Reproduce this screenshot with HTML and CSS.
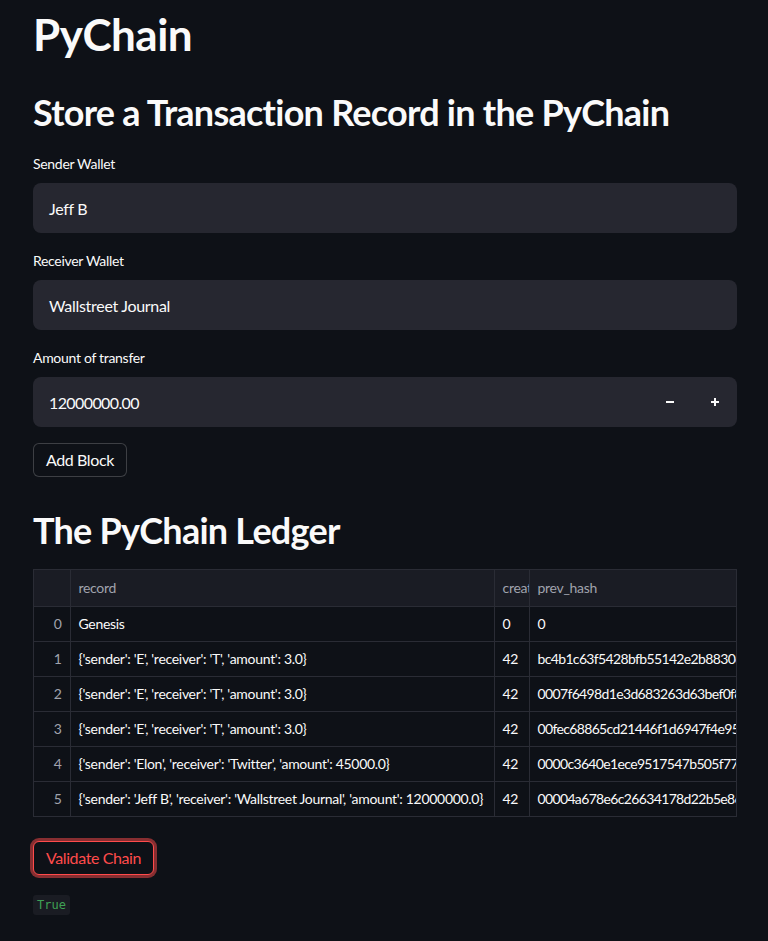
FILE: index.html
```html
<!DOCTYPE html>
<html lang="en">
<head>
<meta charset="utf-8">
<title>PyChain</title>
<link rel="stylesheet" href="styles.css">
</head>
<body>
<main class="app">
  <h1 class="title">PyChain</h1>
  <h2 class="heading">Store a Transaction Record in the PyChain</h2>

  <div class="field first">
    <label class="label">Sender Wallet</label>
    <div class="input">Jeff B</div>
  </div>
  <div class="field">
    <label class="label">Receiver Wallet</label>
    <div class="input">Wallstreet Journal</div>
  </div>
  <div class="field">
    <label class="label">Amount of transfer</label>
    <div class="input number">
      <span class="value">12000000.00</span>
      <div class="steppers">
        <span class="step"><svg width="10" height="10" viewBox="0 0 10 10"><rect x="1" y="4" width="8" height="2" fill="#fafafa"/></svg></span>
        <span class="step"><svg width="10" height="10" viewBox="0 0 10 10"><rect x="1" y="4" width="8" height="2" fill="#fafafa"/><rect x="4" y="1" width="2" height="8" fill="#fafafa"/></svg></span>
      </div>
    </div>
  </div>
  <div class="actions">
    <button class="btn">Add Block</button>
  </div>

  <h2 class="heading ledger">The PyChain Ledger</h2>

  <div class="grid">
    <table>
      <colgroup>
        <col class="c-idx"><col class="c-rec"><col class="c-cre"><col class="c-hash">
      </colgroup>
      <thead>
        <tr><th></th><th>record</th><th>creator_id</th><th>prev_hash</th></tr>
      </thead>
      <tbody>
        <tr><td class="idx">0</td><td>Genesis</td><td>0</td><td class="hash">0</td></tr>
        <tr><td class="idx">1</td><td>{'sender': 'E', 'receiver': 'T', 'amount': 3.0}</td><td>42</td><td class="hash">bc4b1c63f5428bfb55142e2b88306a1f</td></tr>
        <tr><td class="idx">2</td><td>{'sender': 'E', 'receiver': 'T', 'amount': 3.0}</td><td>42</td><td class="hash">0007f6498d1e3d683263d63bef0f80a2</td></tr>
        <tr><td class="idx">3</td><td>{'sender': 'E', 'receiver': 'T', 'amount': 3.0}</td><td>42</td><td class="hash">00fec68865cd21446f1d6947f4e95b1c</td></tr>
        <tr><td class="idx">4</td><td>{'sender': 'Elon', 'receiver': 'Twitter', 'amount': 45000.0}</td><td>42</td><td class="hash">0000c3640e1ece9517547b505f7799ad</td></tr>
        <tr><td class="idx">5</td><td>{'sender': 'Jeff B', 'receiver': 'Wallstreet Journal', 'amount': 12000000.0}</td><td>42</td><td class="hash">00004a678e6c26634178d22b5e8634f0</td></tr>
      </tbody>
    </table>
  </div>

  <div class="actions validate">
    <button class="btn danger">Validate Chain</button>
  </div>
  <div class="result"><code class="code">True</code></div>
</main>
</body>
</html>
```

FILE: styles.css
```css
* { box-sizing: border-box; }
html, body {
  margin: 0;
  padding: 0;
  background: #0e1117;
  color: #fafafa;
  font-family: Lato, "Noto Sans", sans-serif;
}
.app {
  width: 704px;
  margin-left: 33px;
  display: flex;
  flex-direction: column;
}
.title {
  margin: 8px 0 0 0;
  font-size: 44px;
  line-height: 52px;
  font-weight: 700;
  letter-spacing: -0.5px;
}
.heading {
  margin: 30px 0 0 0;
  font-size: 36px;
  line-height: 44px;
  font-weight: 700;
  letter-spacing: -0.75px;
}
.field {
  display: flex;
  flex-direction: column;
  margin-top: 18px;
}
.field.first { margin-top: 20px; }
.label {
  font-size: 14px;
  line-height: 20px;
  margin-bottom: 9px;
  letter-spacing: -0.3px;
}
.input {
  height: 50px;
  background: #262730;
  border-radius: 8px;
  padding: 0 16px;
  display: flex;
  align-items: center;
  font-size: 16px;
  letter-spacing: -0.3px;
}
.input.number {
  padding-right: 0;
  justify-content: space-between;
}
.value { letter-spacing: -0.6px; }
.steppers {
  display: flex;
  height: 100%;
}
.step {
  width: 45px;
  display: flex;
  align-items: center;
  justify-content: center;
}
.actions {
  display: flex;
  margin-top: 16px;
}
.btn {
  font-family: inherit;
  font-size: 16px;
  color: #fafafa;
  background: #0e1117;
  border: 1px solid rgba(250, 250, 250, 0.2);
  border-radius: 6px;
  height: 34px;
  padding: 0 12px;
  line-height: 1;
  letter-spacing: -0.4px;
}
.ledger { margin-top: 31px; }
.grid {
  margin-top: 17px;
  width: 704px;
  overflow: hidden;
  border: 1px solid #2a2c35;
}
table {
  border-collapse: collapse;
  table-layout: fixed;
  width: 780px;
  font-size: 14px;
  letter-spacing: -0.3px;
}
.c-idx { width: 36px; }
.c-rec { width: 424px; }
.c-cre { width: 35px; }
.c-hash { width: 285px; }
th, td {
  height: 35px;
  padding: 0 8px;
  text-align: left;
  white-space: nowrap;
  overflow: hidden;
  border-right: 1px solid #2a2c35;
  border-bottom: 1px solid #2a2c35;
  font-weight: 400;
}
th {
  height: 36px;
  background: #1a1c24;
  color: #a0a3ad;
  text-overflow: clip;
}
td { color: #fafafa; }
td.hash { letter-spacing: -0.65px; }
td.idx {
  text-align: right;
  color: #a0a3ad;
}
tbody tr:last-child td { border-bottom: none; }
.validate { margin-top: 24px; }
.btn.danger {
  color: #ff4b4b;
  border-color: #ff4b4b;
  box-shadow: 0 0 0 3px rgba(255, 75, 75, 0.5);
  height: 34px;
  padding: 0 12px;
}
.result {
  margin-top: 20px;
  display: flex;
}
.code {
  font-family: "DejaVu Sans Mono", monospace;
  font-size: 12px;
  color: #3fa155;
  background: #1a1c23;
  padding: 3px 4px;
  border-radius: 3px;
}
```
